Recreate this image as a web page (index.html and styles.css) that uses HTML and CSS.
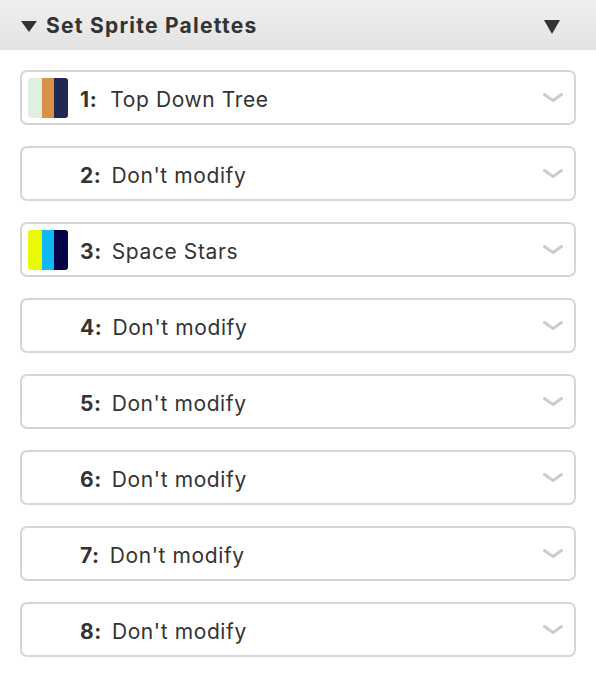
FILE: index.html
```html
<!DOCTYPE html>
<html>
<head>
<meta charset="utf-8">
<link rel="stylesheet" href="styles.css">
</head>
<body>
<div class="panel">
  <div class="header">
    <svg class="tri-left" width="16" height="11" viewBox="0 0 16 11"><polygon points="0,0 16,0 8,11" fill="#333"/></svg>
    <span class="title">Set Sprite Palettes</span>
    <svg class="tri-right" width="16" height="14" viewBox="0 0 16 14"><polygon points="0,0 16,0 8,14" fill="#333"/></svg>
  </div>
  <div class="list">
    <div class="select">
      <div class="swatch"><span class="s1" style="background:#dff0e2"></span><span class="s2" style="background:#d9914a"></span><span class="s3" style="background:#1f2952"></span></div>
      <span class="num">1:</span><span class="label first">Top Down Tree</span>
      <svg class="chev" width="20" height="9" viewBox="0 0 20 9"><polyline points="1.5,1.5 10,7.5 18.5,1.5" fill="none" stroke="#cccccc" stroke-width="3" stroke-linecap="round" stroke-linejoin="round"/></svg>
    </div>
    <div class="select">
      <div class="swatch empty"></div>
      <span class="num">2:</span><span class="label">Don't modify</span>
      <svg class="chev" width="20" height="9" viewBox="0 0 20 9"><polyline points="1.5,1.5 10,7.5 18.5,1.5" fill="none" stroke="#cccccc" stroke-width="3" stroke-linecap="round" stroke-linejoin="round"/></svg>
    </div>
    <div class="select">
      <div class="swatch"><span class="s1" style="background:#e8fb05"></span><span class="s2" style="background:#10b9f1"></span><span class="s3" style="background:#030347"></span></div>
      <span class="num">3:</span><span class="label">Space Stars</span>
      <svg class="chev" width="20" height="9" viewBox="0 0 20 9"><polyline points="1.5,1.5 10,7.5 18.5,1.5" fill="none" stroke="#cccccc" stroke-width="3" stroke-linecap="round" stroke-linejoin="round"/></svg>
    </div>
    <div class="select">
      <div class="swatch empty"></div>
      <span class="num">4:</span><span class="label">Don't modify</span>
      <svg class="chev" width="20" height="9" viewBox="0 0 20 9"><polyline points="1.5,1.5 10,7.5 18.5,1.5" fill="none" stroke="#cccccc" stroke-width="3" stroke-linecap="round" stroke-linejoin="round"/></svg>
    </div>
    <div class="select">
      <div class="swatch empty"></div>
      <span class="num">5:</span><span class="label">Don't modify</span>
      <svg class="chev" width="20" height="9" viewBox="0 0 20 9"><polyline points="1.5,1.5 10,7.5 18.5,1.5" fill="none" stroke="#cccccc" stroke-width="3" stroke-linecap="round" stroke-linejoin="round"/></svg>
    </div>
    <div class="select">
      <div class="swatch empty"></div>
      <span class="num">6:</span><span class="label">Don't modify</span>
      <svg class="chev" width="20" height="9" viewBox="0 0 20 9"><polyline points="1.5,1.5 10,7.5 18.5,1.5" fill="none" stroke="#cccccc" stroke-width="3" stroke-linecap="round" stroke-linejoin="round"/></svg>
    </div>
    <div class="select">
      <div class="swatch empty"></div>
      <span class="num">7:</span><span class="label">Don't modify</span>
      <svg class="chev" width="20" height="9" viewBox="0 0 20 9"><polyline points="1.5,1.5 10,7.5 18.5,1.5" fill="none" stroke="#cccccc" stroke-width="3" stroke-linecap="round" stroke-linejoin="round"/></svg>
    </div>
    <div class="select">
      <div class="swatch empty"></div>
      <span class="num">8:</span><span class="label">Don't modify</span>
      <svg class="chev" width="20" height="9" viewBox="0 0 20 9"><polyline points="1.5,1.5 10,7.5 18.5,1.5" fill="none" stroke="#cccccc" stroke-width="3" stroke-linecap="round" stroke-linejoin="round"/></svg>
    </div>
  </div>
</div>
</body>
</html>
```
FILE: styles.css
```css
* { box-sizing: border-box; }
html, body { margin: 0; padding: 0; background: #ffffff; }
body { font-family: Inter, "Noto Sans", sans-serif; color: #333333; width: 596px; height: 678px; overflow: hidden; }
.header {
  height: 50px;
  display: flex;
  align-items: center;
  padding: 1px 36px 0 21px;
  background: linear-gradient(#efefef, #e3e3e3);
}
.tri-left { flex: none; margin-right: 9px; margin-top: 1px; }
.title { font-weight: 700; font-size: 21px; color: #333; flex: 1; letter-spacing: 1.25px; }
.tri-right { flex: none; margin-top: 2px; }
.list {
  display: flex;
  flex-direction: column;
  gap: 21px;
  padding: 20px 20px 0 20px;
}
.select {
  height: 55px;
  border: 2px solid #d6d6d6;
  border-radius: 7px;
  display: flex;
  align-items: center;
  padding: 3px 11px 0 6px;
}
.swatch {
  width: 40px;
  height: 40px;
  border-radius: 3px;
  overflow: hidden;
  display: flex;
  flex: none;
  margin-right: 12px;
  margin-top: -3px;
}
.swatch span { height: 100%; }
.s1 { width: 14px; }
.s2 { width: 12px; }
.s3 { width: 14px; }
.num { font-weight: 700; font-size: 21px; margin-right: 10px; letter-spacing: 0.6px; }
.label { font-size: 21px; flex: 1; letter-spacing: 0.6px; }
.label.first { margin-left: 3px; }
.chev { flex: none; margin-top: -4px; }
```
